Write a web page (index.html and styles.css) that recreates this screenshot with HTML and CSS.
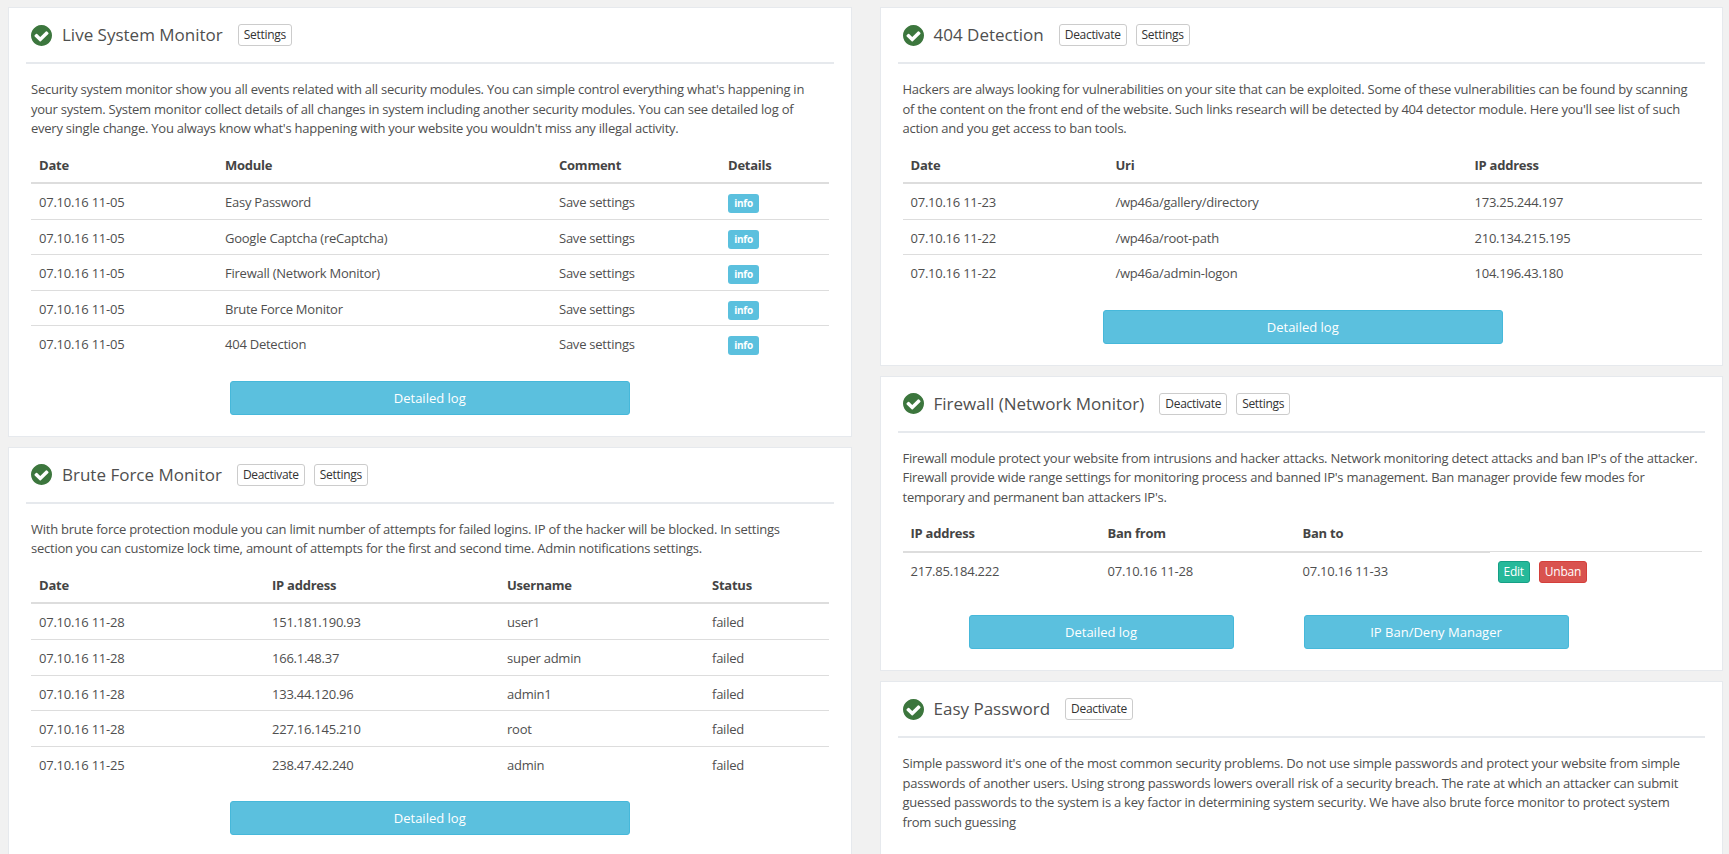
FILE: index.html
```html
<!DOCTYPE html>
<html lang="en">
<head>
  <meta charset="UTF-8">
  <meta name="viewport" content="width=device-width, initial-scale=1.0">
  <title>Security Dashboard</title>
  <link rel="stylesheet" href="styles.css">
</head>
<body>
  <svg class="icon-sprite" aria-hidden="true">
    <symbol id="check-circle" viewBox="128 128 1536 1536">
      <path d="M1412 734q0-28-18-46l-91-90q-19-19-45-19t-45 19l-408 407-226-226q-19-19-45-19t-45 19l-91 90q-18 18-18 46 0 27 18 45l362 362q19 19 45 19 27 0 46-19l543-543q18-18 18-45zm252 162q0 209-103 385.5t-279.5 279.5-385.5 103-385.5-103-279.5-279.5-103-385.5 103-385.5 279.5-279.5 385.5-103 385.5 103 279.5 279.5 103 385.5z"/>
    </symbol>
  </svg>

  <div class="page">
    <div class="column left">

      <section class="panel">
        <div class="panel-title">
          <svg class="status-icon"><use href="#check-circle"></use></svg>
          <h2>Live System Monitor</h2>
          <a class="btn-small first">Settings</a>
        </div>
        <p>Security system monitor show you all events related with all security modules. You can simple control everything what's happening in your system. System monitor collect details of all changes in system including another security modules. You can see detailed log of every single change. You always know what's happening with your website you wouldn't miss any illegal activity.</p>
        <table class="monitor-table">
          <thead>
            <tr><th>Date</th><th>Module</th><th>Comment</th><th>Details</th></tr>
          </thead>
          <tbody>
            <tr><td>07.10.16 11-05</td><td>Easy Password</td><td>Save settings</td><td><span class="label-info">info</span></td></tr>
            <tr><td>07.10.16 11-05</td><td>Google Captcha (reCaptcha)</td><td>Save settings</td><td><span class="label-info">info</span></td></tr>
            <tr><td>07.10.16 11-05</td><td>Firewall (Network Monitor)</td><td>Save settings</td><td><span class="label-info">info</span></td></tr>
            <tr><td>07.10.16 11-05</td><td>Brute Force Monitor</td><td>Save settings</td><td><span class="label-info">info</span></td></tr>
            <tr><td>07.10.16 11-05</td><td>404 Detection</td><td>Save settings</td><td><span class="label-info">info</span></td></tr>
          </tbody>
        </table>
        <div class="actions"><a class="btn-log">Detailed log</a></div>
      </section>

      <section class="panel">
        <div class="panel-title">
          <svg class="status-icon"><use href="#check-circle"></use></svg>
          <h2>Brute Force Monitor</h2>
          <a class="btn-small first">Deactivate</a>
          <a class="btn-small">Settings</a>
        </div>
        <p>With brute force protection module you can limit number of attempts for failed logins. IP of the hacker will be blocked. In settings section you can customize lock time, amount of attempts for the first and second time. Admin notifications settings.</p>
        <table class="brute-table">
          <thead>
            <tr><th>Date</th><th>IP address</th><th>Username</th><th>Status</th></tr>
          </thead>
          <tbody>
            <tr><td>07.10.16 11-28</td><td>151.181.190.93</td><td>user1</td><td>failed</td></tr>
            <tr><td>07.10.16 11-28</td><td>166.1.48.37</td><td>super admin</td><td>failed</td></tr>
            <tr><td>07.10.16 11-28</td><td>133.44.120.96</td><td>admin1</td><td>failed</td></tr>
            <tr><td>07.10.16 11-28</td><td>227.16.145.210</td><td>root</td><td>failed</td></tr>
            <tr><td>07.10.16 11-25</td><td>238.47.42.240</td><td>admin</td><td>failed</td></tr>
          </tbody>
        </table>
        <div class="actions"><a class="btn-log">Detailed log</a></div>
      </section>

    </div>
    <div class="column right">

      <section class="panel">
        <div class="panel-title">
          <svg class="status-icon"><use href="#check-circle"></use></svg>
          <h2>404 Detection</h2>
          <a class="btn-small first">Deactivate</a>
          <a class="btn-small">Settings</a>
        </div>
        <p>Hackers are always looking for vulnerabilities on your site that can be exploited. Some of these vulnerabilities can be found by scanning of the content on the front end of the website. Such links research will be detected by 404 detector module. Here you'll see list of such action and you get access to ban tools.</p>
        <table class="detect-table">
          <thead>
            <tr><th>Date</th><th>Uri</th><th>IP address</th></tr>
          </thead>
          <tbody>
            <tr><td>07.10.16 11-23</td><td>/wp46a/gallery/directory</td><td>173.25.244.197</td></tr>
            <tr><td>07.10.16 11-22</td><td>/wp46a/root-path</td><td>210.134.215.195</td></tr>
            <tr><td>07.10.16 11-22</td><td>/wp46a/admin-logon</td><td>104.196.43.180</td></tr>
          </tbody>
        </table>
        <div class="actions nudged"><a class="btn-log">Detailed log</a></div>
      </section>

      <section class="panel">
        <div class="panel-title">
          <svg class="status-icon"><use href="#check-circle"></use></svg>
          <h2>Firewall (Network Monitor)</h2>
          <a class="btn-small first">Deactivate</a>
          <a class="btn-small">Settings</a>
        </div>
        <p>Firewall module protect your website from intrusions and hacker attacks. Network monitoring detect attacks and ban IP's of the attacker. Firewall provide wide range settings for monitoring process and banned IP's management. Ban manager provide few modes for temporary and permanent ban attackers IP's.</p>
        <table class="firewall-table">
          <thead>
            <tr><th>IP address</th><th>Ban from</th><th>Ban to</th><th class="th-empty"></th></tr>
          </thead>
          <tbody>
            <tr>
              <td>217.85.184.222</td><td>07.10.16 11-28</td><td>07.10.16 11-33</td>
              <td><a class="btn-edit">Edit</a><a class="btn-unban">Unban</a></td>
            </tr>
          </tbody>
        </table>
        <div class="actions split"><a class="btn-log narrow">Detailed log</a><a class="btn-log narrow">IP Ban/Deny Manager</a></div>
      </section>

      <section class="panel">
        <div class="panel-title">
          <svg class="status-icon"><use href="#check-circle"></use></svg>
          <h2>Easy Password</h2>
          <a class="btn-small first">Deactivate</a>
        </div>
        <p>Simple password it's one of the most common security problems. Do not use simple passwords and protect your website from simple passwords of another users. Using strong passwords lowers overall risk of a security breach. The rate at which an attacker can submit guessed passwords to the system is a key factor in determining system security. We have also brute force monitor to protect system from such guessing</p>
      </section>

    </div>
  </div>
</body>
</html>
```

FILE: styles.css
```css
html, body {
  height: 854px;
  overflow: hidden;
}
body {
  margin: 0;
  font-family: "Open Sans", Arial, sans-serif;
  font-size: 13px;
  line-height: 1.42857;
  letter-spacing: -0.24px;
  color: #4f4f4f;
  background-color: #f1f1f1;
}
.icon-sprite {
  display: none;
}
.page {
  display: flex;
  gap: 28px;
  padding: 7px 6px 0 8px;
}
.column {
  flex: 1;
  min-width: 0;
  display: flex;
  flex-direction: column;
  gap: 10px;
}
.panel {
  background-color: #fff;
  border: 1px solid #e6e9ed;
  padding: 0 17px 21px;
}
.panel-title {
  display: flex;
  align-items: center;
  height: 54px;
  border-bottom: 2px solid #e6e9ed;
}
.panel-title h2 {
  margin: 0 0 0 10px;
  font-size: 17px;
  font-weight: 400;
  letter-spacing: 0;
  color: #4f4f4f;
}
.status-icon {
  width: 21px;
  height: 21px;
  margin-left: 5px;
  fill: #3c763d;
}
.btn-small {
  margin-left: 9px;
  padding: 0 5px;
  height: 20px;
  line-height: 20px;
  font-size: 12px;
  letter-spacing: -0.3px;
  color: #333;
  background-color: #fff;
  border: 1px solid #ccc;
  border-radius: 3px;
}
.btn-small.first {
  margin-left: 15px;
}
p {
  margin: 16px 0 9px;
  padding: 0 5px;
  line-height: 1.5;
}
.left p {
  padding-right: 12px;
}
.right p {
  padding-right: 7px;
}
table {
  width: calc(100% - 10px);
  margin: 0 5px;
  border-collapse: collapse;
  table-layout: fixed;
}
.right table {
  width: calc(100% - 8px);
}
th {
  text-align: left;
  font-weight: 700;
  color: #444;
  padding: 8px;
  border-bottom: 2px solid #ddd;
}
th.th-empty {
  border-bottom: 1px solid #ddd;
}
td {
  padding: 9px 8px 7px;
  border-top: 1px solid #ddd;
  vertical-align: top;
}
tbody tr:first-child td {
  border-top: 0;
}
.monitor-table th:nth-child(1) { width: 170px; }
.monitor-table th:nth-child(2) { width: 318px; }
.monitor-table th:nth-child(3) { width: 153px; }

.brute-table th:nth-child(1) { width: 217px; }
.brute-table th:nth-child(2) { width: 219px; }
.brute-table th:nth-child(3) { width: 189px; }

.detect-table th:nth-child(1) { width: 189px; }
.detect-table th:nth-child(2) { width: 343px; }

.firewall-table th:nth-child(1) { width: 181px; }
.firewall-table th:nth-child(2) { width: 179px; }
.firewall-table th:nth-child(3) { width: 179px; }

.label-info {
  display: inline-block;
  vertical-align: top;
  width: 31px;
  height: 19px;
  margin: 1px 0 -2px;
  line-height: 19px;
  text-align: center;
  font-size: 10px;
  font-weight: 700;
  color: #fff;
  background-color: #5bc0de;
  border-radius: 3px;
}
.actions {
  display: flex;
  justify-content: center;
  margin-top: 20px;
}
.actions.nudged {
  padding-left: 3px;
}
.actions.split {
  justify-content: flex-start;
  gap: 70px;
  margin-top: 25px;
  padding-left: 71px;
}
.btn-log {
  width: 398px;
  height: 32px;
  line-height: 32px;
  text-align: center;
  letter-spacing: 0;
  color: #fff;
  background-color: #5bc0de;
  border: 1px solid #46b8da;
  border-radius: 3px;
}
.btn-log.narrow {
  width: 263px;
}
.btn-edit,
.btn-unban {
  display: inline-block;
  height: 20px;
  line-height: 20px;
  padding: 0 5px;
  font-size: 12px;
  color: #fff;
  border-radius: 3px;
}
.btn-edit {
  background-color: #26b99a;
  border: 1px solid #169f85;
}
.btn-unban {
  margin-left: 9px;
  background-color: #d9534f;
  border: 1px solid #d43f3a;
}
```
